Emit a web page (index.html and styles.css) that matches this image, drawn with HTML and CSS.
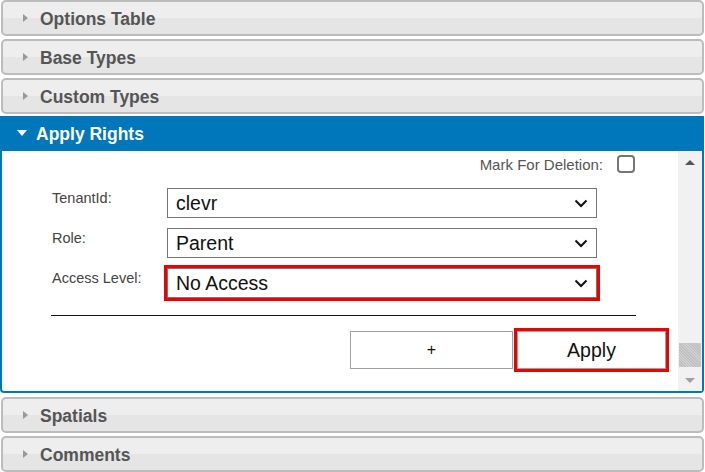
FILE: index.html
```html
<!DOCTYPE html>
<html lang="en">
<head>
  <meta charset="UTF-8">
  <title>Apply Rights</title>
  <link rel="stylesheet" href="styles.css">
</head>
<body>
  <div class="accordion">
    <div class="acc-head"><span class="arrow"></span>Options Table</div>
    <div class="acc-head"><span class="arrow"></span>Base Types</div>
    <div class="acc-head"><span class="arrow"></span>Custom Types</div>

    <div class="panel">
      <div class="panel-head"><span class="arrow-down"></span>Apply Rights</div>
      <div class="panel-body">
        <div class="form">
          <div class="mark-row">
            <span>Mark For Deletion:</span>
            <span class="checkbox"></span>
          </div>

          <div class="row">
            <label>TenantId:</label>
            <div class="select">clevr
              <svg width="14" height="9" viewBox="0 0 14 9"><path d="M1.5 1.5 L7 7 L12.5 1.5" fill="none" stroke="#111" stroke-width="2"/></svg>
            </div>
          </div>
          <div class="row">
            <label>Role:</label>
            <div class="select">Parent
              <svg width="14" height="9" viewBox="0 0 14 9"><path d="M1.5 1.5 L7 7 L12.5 1.5" fill="none" stroke="#111" stroke-width="2"/></svg>
            </div>
          </div>
          <div class="row row-marked">
            <label>Access Level:</label>
            <div class="highlight">
              <div class="select">No Access
                <svg width="14" height="9" viewBox="0 0 14 9"><path d="M1.5 1.5 L7 7 L12.5 1.5" fill="none" stroke="#111" stroke-width="2"/></svg>
              </div>
            </div>
          </div>

          <div class="divider"></div>

          <div class="buttons">
            <button class="btn">+</button>
            <div class="highlight">
              <button class="btn btn-apply">Apply</button>
            </div>
          </div>
        </div>

        <div class="scrollbar">
          <span class="sb-up"></span>
          <span class="sb-thumb"></span>
          <span class="sb-down"></span>
        </div>
      </div>
    </div>

    <div class="acc-head"><span class="arrow"></span>Spatials</div>
    <div class="acc-head"><span class="arrow"></span>Comments</div>
  </div>
</body>
</html>
```
FILE: styles.css
```css
body {
  margin: 0;
  width: 705px;
  font-family: 'Liberation Sans', Arial, sans-serif;
  background: #fff;
}
.accordion {
  display: flex;
  flex-direction: column;
}
.acc-head {
  box-sizing: border-box;
  height: 36px;
  margin: 0 1px 3px 1px;
  border: 2px solid #bcbcbc;
  border-radius: 5px;
  background: linear-gradient(#eeeeee 50%, #e5e5e5 50%);
  display: flex;
  align-items: center;
  padding: 2px 0 0 20px;
  font-size: 17.5px;
  font-weight: bold;
  color: #555;
}
.arrow {
  width: 0;
  height: 0;
  border-top: 4.5px solid transparent;
  border-bottom: 4.5px solid transparent;
  border-left: 5px solid #999;
  margin: -2px 12px 0 0;
}
.panel {
  box-sizing: border-box;
  width: 704px;
  margin-top: -1px;
  margin-bottom: 4px;
  border: 2px solid #0077bb;
  border-top: none;
  border-radius: 0 0 4px 4px;
}
.panel-head {
  height: 34px;
  margin: 0 -2px;
  background: #0077bb;
  color: #fff;
  font-size: 17.5px;
  font-weight: bold;
  display: flex;
  align-items: center;
  padding: 1px 0 0 17px;
}
.arrow-down {
  width: 0;
  height: 0;
  border-left: 5px solid transparent;
  border-right: 5px solid transparent;
  border-top: 6px solid #fff;
  margin: -2px 9px 0 0;
}
.panel-body {
  display: flex;
  height: 240px;
}
.form {
  flex: 1;
  padding: 4px 0 0 50px;
  font-size: 14.5px;
  color: #444;
}
.mark-row {
  display: flex;
  justify-content: flex-end;
  align-items: center;
  gap: 14px;
  padding-right: 43px;
  font-size: 15px;
  color: #555;
}
.checkbox {
  box-sizing: border-box;
  width: 18px;
  height: 18px;
  border: 2px solid #767676;
  border-radius: 4px;
}
.row {
  display: flex;
  align-items: flex-start;
  margin-top: 10px;
}
.mark-row + .row {
  margin-top: 15px;
}
.row label {
  width: 115px;
  padding-top: 2px;
}
.row-marked {
  margin-top: 7px;
}
.row-marked label {
  padding-top: 5px;
}
.highlight {
  border: 3px solid #ee0000;
  margin-left: -3px;
}
.select {
  box-sizing: border-box;
  width: 430px;
  height: 30px;
  border: 1px solid #767676;
  display: flex;
  align-items: center;
  justify-content: space-between;
  padding: 0 8px 0 8px;
  font-size: 19.5px;
  color: #111;
}
.divider {
  width: 585px;
  margin: 14px 0 0 -1px;
  border-top: 1px solid #111;
}
.buttons {
  display: flex;
  align-items: center;
  justify-content: flex-end;
  padding-right: 9px;
  margin-top: 12px;
}
.btn {
  box-sizing: border-box;
  width: 163px;
  height: 38px;
  background: #fff;
  border: 1px solid #a0a0a0;
  font-family: 'Liberation Sans', Arial, sans-serif;
  font-size: 16px;
  color: #111;
}
.buttons .highlight {
  margin-left: 1px;
}
.btn-apply {
  display: block;
  width: 149px;
  font-size: 19.5px;
  border-color: #a0a0a0;
}
.scrollbar {
  width: 24px;
  background: #f1f1f1;
  display: flex;
  flex-direction: column;
  align-items: center;
}
.sb-up {
  margin-top: 9px;
  border-left: 5px solid transparent;
  border-right: 5px solid transparent;
  border-bottom: 5px solid #555;
}
.sb-thumb {
  width: 22px;
  height: 24px;
  margin-top: 178px;
  background: repeating-linear-gradient(45deg, #c0c0c0 0 1px, #cfcfcf 1px 2px);
}
.sb-down {
  margin-top: 11px;
  border-left: 5px solid transparent;
  border-right: 5px solid transparent;
  border-top: 5px solid #a0a0a0;
}
```
